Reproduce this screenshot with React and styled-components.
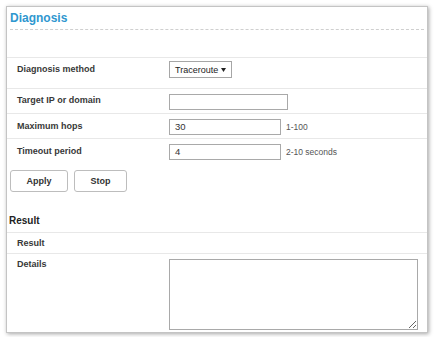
import styled, { createGlobalStyle } from "styled-components";

const GlobalStyle = createGlobalStyle`
  body {
    margin: 0;
    background: #ffffff;
    font-family: "Liberation Sans", Arial, sans-serif;
  }
`;

const Panel = styled.div`
  margin: 6px;
  width: 422px;
  height: 327px;
  box-sizing: border-box;
  border: 1px solid #c4c4c4;
  box-shadow: 1px 1px 4px rgba(0, 0, 0, 0.35);
  background: #ffffff;
  display: flex;
  flex-direction: column;
`;

const Header = styled.div`
  margin: 0 3px;
  height: 22px;
  border-bottom: 1px dashed #cfcfcf;
  display: flex;
  align-items: center;
`;

const Title = styled.h1`
  margin: 0;
  font-size: 12px;
  font-weight: bold;
  color: #2f97cf;
  line-height: 22px;
`;

const Form = styled.div`
  margin-top: 27px;
  display: flex;
  flex-direction: column;
`;

const Row = styled.div`
  display: flex;
  align-items: flex-start;
  border-top: 1px solid #e8e8e8;
  height: ${(props) => props.$height}px;
  box-sizing: border-box;
  flex-shrink: 0;
`;

const Label = styled.div`
  width: 152px;
  padding-left: 10px;
  padding-top: ${(props) => props.$top ?? 4}px;
  font-size: 9px;
  font-weight: bold;
  color: #383838;
  line-height: 14px;
`;

const Select = styled.div`
  margin-top: 3px;
  width: 63px;
  height: 17px;
  box-sizing: border-box;
  border: 1px solid #a6a6a6;
  display: flex;
  align-items: center;
  justify-content: space-between;
  padding: 0 5px 0 5px;
  font-size: 9px;
  color: #222222;
`;

const Input = styled.div`
  margin-top: 5px;
  width: ${(props) => props.$width}px;
  height: 16px;
  box-sizing: border-box;
  border: 1px solid #a9a9a9;
  padding-left: 5px;
  font-size: 9.5px;
  color: #333333;
  line-height: 14px;
`;

const Hint = styled.span`
  margin-left: 5px;
  padding-top: 6px;
  font-size: 8.5px;
  color: #555555;
  line-height: 14px;
`;

const Buttons = styled.div`
  display: flex;
  gap: 6px;
  margin: 7px 0 0 3px;
`;

const Button = styled.button`
  width: ${(props) => props.$width}px;
  height: 22px;
  border: 1px solid #bdbdbd;
  border-radius: 3px;
  background: #ffffff;
  font-family: "Liberation Sans", Arial, sans-serif;
  font-size: 9px;
  font-weight: bold;
  color: #333333;
  padding: 0;
`;

const Section = styled.h2`
  margin: 22px 0 0;
  padding: 0 0 4px 2px;
  font-size: 10px;
  font-weight: bold;
  color: #222222;
  line-height: 14px;
`;

const Details = styled.textarea`
  margin-top: 5px;
  width: 249px;
  height: 71px;
  box-sizing: border-box;
  border: 1px solid #a9a9a9;
  padding: 2px;
  font-family: "Liberation Sans", Arial, sans-serif;
  font-size: 9.5px;
  outline: none;
`;

const Arrow = () => (
  <svg width="5" height="4" viewBox="0 0 5 4">
    <path d="M0 0 L5 0 L2.5 4 Z" fill="#222" />
  </svg>
);

export default function App() {
  return (
    <>
      <GlobalStyle />
      <Panel>
        <Header>
          <Title>Diagnosis</Title>
        </Header>
        <Form>
          <Row $height={31}>
            <Label>Diagnosis method</Label>
            <Select>
              <span>Traceroute</span>
              <Arrow />
            </Select>
          </Row>
          <Row $height={25}>
            <Label>Target IP or domain</Label>
            <Input $width={119} />
          </Row>
          <Row $height={25}>
            <Label $top={5}>Maximum hops</Label>
            <Input $width={112}>30</Input>
            <Hint>1-100</Hint>
          </Row>
          <Row $height={25}>
            <Label $top={5}>Timeout period</Label>
            <Input $width={112}>4</Input>
            <Hint>2-10 seconds</Hint>
          </Row>
        </Form>
        <Buttons>
          <Button $width={58}>Apply</Button>
          <Button $width={53}>Stop</Button>
        </Buttons>
        <Section>Result</Section>
        <Row $height={21}>
          <Label $top={3}>Result</Label>
        </Row>
        <Row $height={79}>
          <Label $top={3}>Details</Label>
          <Details readOnly />
        </Row>
      </Panel>
    </>
  );
}
